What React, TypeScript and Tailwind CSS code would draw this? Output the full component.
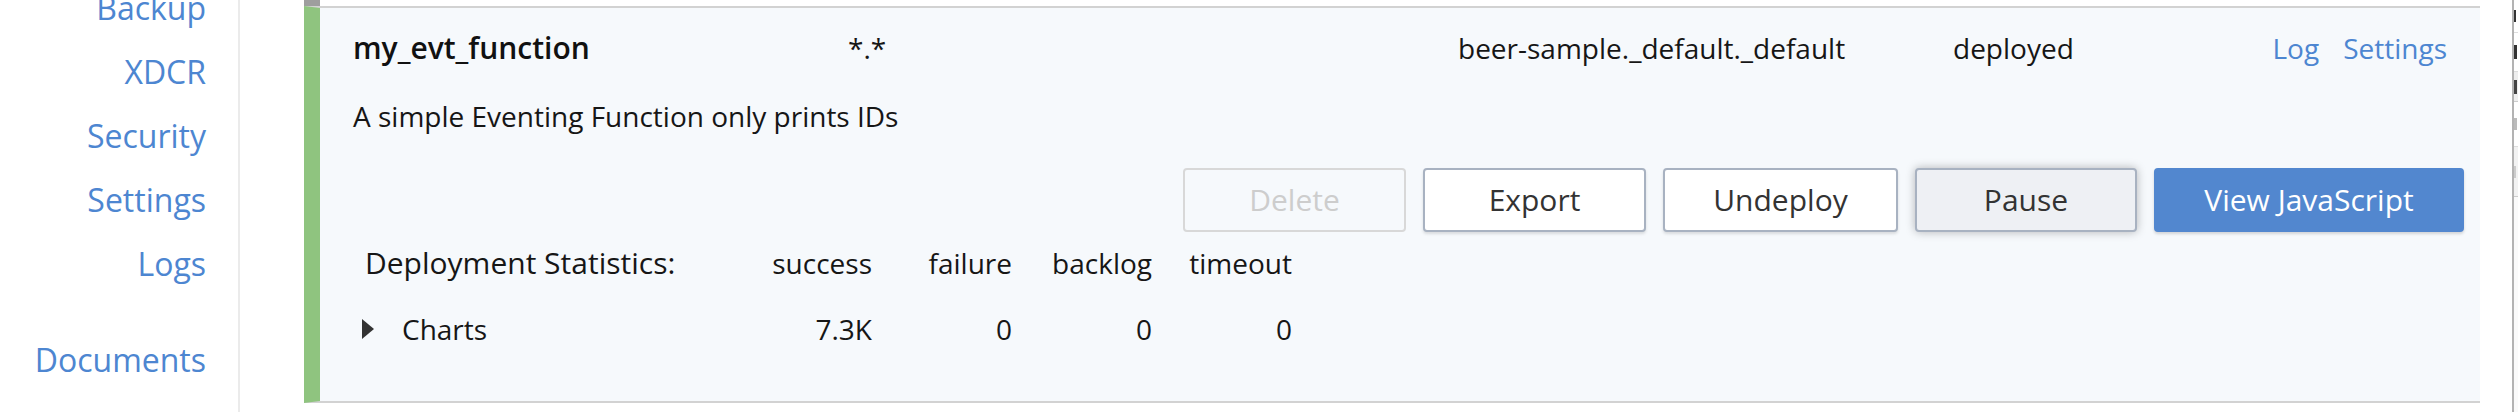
import React from "react";

const navTop = ["Backup", "XDCR", "Security", "Settings", "Logs"];

function Btn({ label, w, kind }: { label: string; w: string; kind: "disabled" | "plain" | "focus" | "primary" }) {
  const base = "h-[64px] rounded-[4px] flex items-center justify-center text-[30px] leading-[40px] shrink-0 " + w;
  const styles: Record<string, string> = {
    disabled: "border-2 border-[#d8d8d8] bg-[#f6f9fc] text-[#cdcdcd]",
    plain: "border-2 border-[#a8b2c1] bg-white text-[#333333] shadow-[0_2px_3px_rgba(0,0,0,0.12)]",
    focus: "border-2 border-[#a8b2c1] bg-[#eef0f4] text-[#333333] shadow-[0_0_10px_rgba(0,0,0,0.28)]",
    primary: "border-2 border-[#5287cf] bg-[#5287cf] text-white shadow-[0_2px_3px_rgba(0,0,0,0.15)]",
  };
  return <div className={base + " " + styles[kind]}>{label}</div>;
}

export default function App() {
  return (
    <div
      className="w-[2518px] h-[412px] flex bg-white overflow-hidden text-[#161616]"
      style={{ fontFamily: '"Open Sans", "Noto Sans", sans-serif' }}
    >
      {/* Sidebar */}
      <div className="w-[240px] h-full border-r-2 border-[#ebebeb] shrink-0 pr-[32px] flex flex-col items-end text-[32px] leading-[64px] text-[#4d86d1]">
        <div className="mt-[-24px] flex flex-col items-end">
          {navTop.map((t) => (
            <div key={t} className="h-[64px] whitespace-nowrap">{t}</div>
          ))}
        </div>
        <div className="mt-[32px] h-[64px]">Documents</div>
      </div>

      {/* Main */}
      <div className="flex-1 pl-[64px] pr-[32px] flex flex-col">
        <div className="h-[6px] flex">
          <div className="w-[16px] h-full bg-[#9e9e9e]" />
        </div>
        <div className="h-[397px] border-l-[16px] border-l-[#8fc47f] border-t-2 border-b-2 border-t-[#d2d2d2] border-b-[#d2d2d2] bg-[#f6f9fc] flex flex-col pl-[33px]">
          {/* Top row */}
          <div className="mt-[20px] h-[40px] flex items-baseline leading-[40px] text-[28px] whitespace-nowrap">
            <div className="w-[495px] text-[30px] font-semibold text-[#111]">my_evt_function</div>
            <div className="w-[610px]">*.*</div>
            <div className="w-[495px]">beer-sample._default._default</div>
            <div className="flex-1">deployed</div>
            <div className="flex gap-[24px] text-[#4d86d1] pr-[33px]">
              <span>Log</span>
              <span>Settings</span>
            </div>
          </div>

          {/* Description */}
          <div className="mt-[29px] text-[28px] leading-[38px] whitespace-nowrap">
            A simple Eventing Function only prints IDs
          </div>

          {/* Buttons */}
          <div className="mt-[33px] flex justify-end gap-[17px] pr-[16px]">
            <Btn label="Delete" w="w-[223px]" kind="disabled" />
            <Btn label="Export" w="w-[223px]" kind="plain" />
            <Btn label="Undeploy" w="w-[235px]" kind="plain" />
            <Btn label="Pause" w="w-[222px]" kind="focus" />
            <Btn label="View JavaScript" w="w-[310px]" kind="primary" />
          </div>

          {/* Stats */}
          <div className="mt-[11px] pl-[9px] grid grid-cols-[370px_140px_140px_140px_140px] text-[28px] leading-[40px] whitespace-nowrap">
            <div className="pl-[3px] text-[30px] h-[40px]">Deployment Statistics:</div>
            <div className="text-right h-[40px]">success</div>
            <div className="text-right h-[40px]">failure</div>
            <div className="text-right h-[40px]">backlog</div>
            <div className="text-right h-[40px]">timeout</div>

            <div className="mt-[26px] h-[40px] flex items-center">
              <svg width="12" height="20" viewBox="0 0 12 20" className="shrink-0">
                <polygon points="0,0 12,10 0,20" fill="#333333" />
              </svg>
              <span className="ml-[28px]">Charts</span>
            </div>
            <div className="mt-[26px] h-[40px] text-right">7.3K</div>
            <div className="mt-[26px] h-[40px] text-right">0</div>
            <div className="mt-[26px] h-[40px] text-right">0</div>
            <div className="mt-[26px] h-[40px] text-right">0</div>
          </div>
        </div>
      </div>

      {/* Right edge: overlapping window edge */}
      <div className="w-[2px] h-full bg-[#b3b3b3] shrink-0" />
      <div className="w-[4px] h-full shrink-0 flex flex-col bg-white">
        <div className="h-[33px] border-b border-[#dddddd] flex items-center"><div className="w-[2px] h-[12px] bg-[#333]" /></div>
        <div className="h-[39px] border-b border-[#dddddd] flex items-center"><div className="w-[3px] h-[14px] bg-[#333]" /></div>
        <div className="h-[30px] border-b border-[#cccccc] bg-[#eeeeee] flex items-center"><div className="w-[3px] h-[14px] bg-[#444]" /></div>
        <div className="h-[45px] border-b border-[#dddddd] flex items-center"><div className="w-[3px] h-[12px] bg-[#bbbbbb]" /></div>
        <div className="h-[50px] border-b border-[#cccccc] bg-[#f2f2f2] flex items-center"><div className="w-[2px] h-[12px] bg-[#cccccc]" /></div>
        <div className="flex-1 bg-[#fafafa]" />
      </div>
    </div>
  );
}
